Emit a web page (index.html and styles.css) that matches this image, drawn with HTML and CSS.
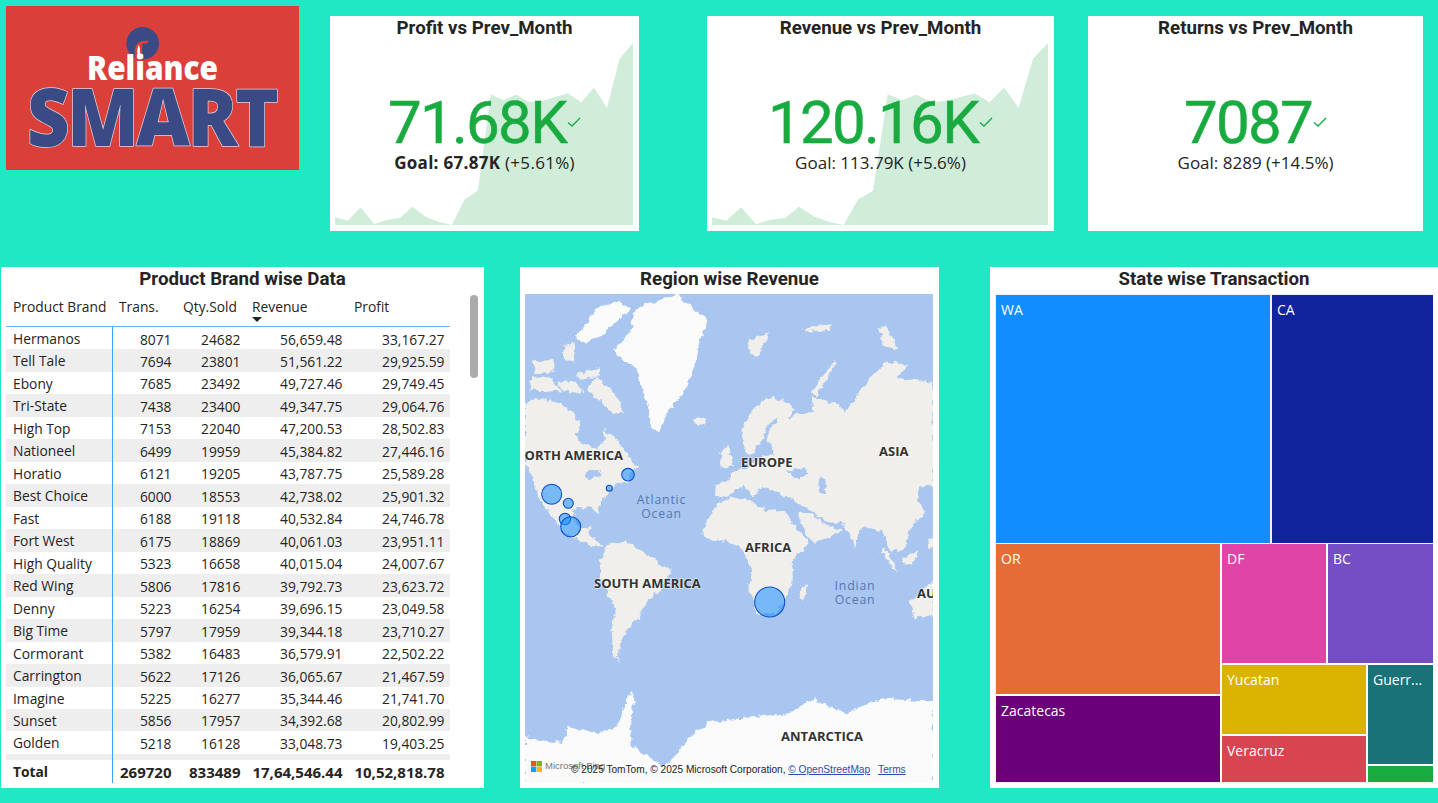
FILE: index.html
```html
<!DOCTYPE html>
<html lang="en">
<head>
<meta charset="utf-8">
<title>Reliance Smart Dashboard</title>
<link rel="stylesheet" href="styles.css">
</head>
<body>
<div class="dash">
  <section class="top">
    <div class="logo">
      <svg viewBox="6 6 293 164" width="293" height="164" aria-label="Reliance Smart logo">
        <circle cx="142.7" cy="43.3" r="16.3" fill="#3A4A85"/>
        <path d="M135.5 59 C133.5 50 135.5 43 141 41.2 L148 40.6 L148 43 L142.5 44 C141.5 48 142.5 54 142.5 59Z" fill="#DB3F3A"/>
        <path d="M138.8 45 C136.5 50 137 54 138.8 58 C140.5 54 140.8 50 138.8 45Z" fill="#fff"/>
        <text class="logo-reliance" x="87" y="80" textLength="131" lengthAdjust="spacingAndGlyphs">Reliance</text>
        <text class="logo-smart" transform="translate(27 146) scale(1 1.08)" textLength="252" lengthAdjust="spacing">SMART</text>
      </svg>
    </div>
    <article class="kpi kpi-a">
      <svg class="spark" viewBox="30 98 893 547" preserveAspectRatio="none"><polygon points="30,622 68,632 107,592 147,642 185,630 225,623 262,590 302,620 340,635 380,645 418,568 458,542 497,252 535,270 573,253 612,275 650,272 690,260 728,250 768,276 806,232 845,293 883,145 923,98 923,645 30,645"/></svg>
      <h2 class="title">Profit vs Prev_Month</h2>
      <div class="value-row"><span class="value">71.68K</span><svg class="check" viewBox="0 0 14 10"><path d="M1 5.5 L5 9 L13 1"/></svg></div>
      <p class="goal"><b>Goal: 67.87K</b> (+5.61%)</p>
    </article>
    <article class="kpi kpi-b">
      <svg class="spark" viewBox="30 98 893 547" preserveAspectRatio="none"><polygon points="30,622 68,632 107,592 147,642 185,630 225,623 262,590 302,620 340,635 380,645 418,568 458,542 497,252 535,270 573,253 612,275 650,272 690,260 728,250 768,276 806,232 845,293 883,145 923,98 923,645 30,645"/></svg>
      <h2 class="title">Revenue vs Prev_Month</h2>
      <div class="value-row"><span class="value">120.16K</span><svg class="check" viewBox="0 0 14 10"><path d="M1 5.5 L5 9 L13 1"/></svg></div>
      <p class="goal">Goal: 113.79K (+5.6%)</p>
    </article>
    <article class="kpi kpi-c">
      <h2 class="title">Returns vs Prev_Month</h2>
      <div class="value-row"><span class="value">7087</span><svg class="check" viewBox="0 0 14 10"><path d="M1 5.5 L5 9 L13 1"/></svg></div>
      <p class="goal">Goal: 8289 (+14.5%)</p>
    </article>
  </section>

  <section class="bottom">
    <article class="panel panel-table">
      <h2 class="title panel-title">Product Brand wise Data</h2>
      <div class="scrollbar"></div>
      <div class="tbl">
        <div class="row head">
          <span>Product Brand</span><span>Trans.</span><span>Qty.Sold</span><span class="sorted">Revenue<i class="arrow"></i></span><span>Profit</span>
        </div>
        <div class="tbody">
          <div class="row"><span>Hermanos</span><span>8071</span><span>24682</span><span>56,659.48</span><span>33,167.27</span></div>
          <div class="row"><span>Tell Tale</span><span>7694</span><span>23801</span><span>51,561.22</span><span>29,925.59</span></div>
          <div class="row"><span>Ebony</span><span>7685</span><span>23492</span><span>49,727.46</span><span>29,749.45</span></div>
          <div class="row"><span>Tri-State</span><span>7438</span><span>23400</span><span>49,347.75</span><span>29,064.76</span></div>
          <div class="row"><span>High Top</span><span>7153</span><span>22040</span><span>47,200.53</span><span>28,502.83</span></div>
          <div class="row"><span>Nationeel</span><span>6499</span><span>19959</span><span>45,384.82</span><span>27,446.16</span></div>
          <div class="row"><span>Horatio</span><span>6121</span><span>19205</span><span>43,787.75</span><span>25,589.28</span></div>
          <div class="row"><span>Best Choice</span><span>6000</span><span>18553</span><span>42,738.02</span><span>25,901.32</span></div>
          <div class="row"><span>Fast</span><span>6188</span><span>19118</span><span>40,532.84</span><span>24,746.78</span></div>
          <div class="row"><span>Fort West</span><span>6175</span><span>18869</span><span>40,061.03</span><span>23,951.11</span></div>
          <div class="row"><span>High Quality</span><span>5323</span><span>16658</span><span>40,015.04</span><span>24,007.67</span></div>
          <div class="row"><span>Red Wing</span><span>5806</span><span>17816</span><span>39,792.73</span><span>23,623.72</span></div>
          <div class="row"><span>Denny</span><span>5223</span><span>16254</span><span>39,696.15</span><span>23,049.58</span></div>
          <div class="row"><span>Big Time</span><span>5797</span><span>17959</span><span>39,344.18</span><span>23,710.27</span></div>
          <div class="row"><span>Cormorant</span><span>5382</span><span>16483</span><span>36,579.91</span><span>22,502.22</span></div>
          <div class="row"><span>Carrington</span><span>5622</span><span>17126</span><span>36,065.67</span><span>21,467.59</span></div>
          <div class="row"><span>Imagine</span><span>5225</span><span>16277</span><span>35,344.46</span><span>21,741.70</span></div>
          <div class="row"><span>Sunset</span><span>5856</span><span>17957</span><span>34,392.68</span><span>20,802.99</span></div>
          <div class="row"><span>Golden</span><span>5218</span><span>16128</span><span>33,048.73</span><span>19,403.25</span></div>
          <div class="row"><span></span><span></span><span></span><span></span><span></span></div>
        </div>
        <div class="row total"><span>Total</span><span>269720</span><span>833489</span><span>17,64,546.44</span><span>10,52,818.78</span></div>
      </div>
    </article>

    <article class="panel panel-map">
      <h2 class="title panel-title">Region wise Revenue</h2>
      <div class="map">
        <svg class="map-svg" viewBox="525 294 408 489" width="408" height="489">
          <defs>
            <filter id="rough" filterUnits="userSpaceOnUse" x="525" y="294" width="408" height="489">
              <feTurbulence type="fractalNoise" baseFrequency="0.16" numOctaves="4" seed="4"/>
              <feDisplacementMap in="SourceGraphic" scale="7" xChannelSelector="R" yChannelSelector="G"/>
              <feGaussianBlur stdDeviation="0.35"/>
            </filter>
          </defs>
          <rect x="525" y="294" width="408" height="489" fill="#A9C6F0"/>
          <g filter="url(#rough)">
            <g class="land" transform="translate(520 265) scale(.33333)">
              <polygon class="ice" points="280,255 330,200 345,130 420,105 470,90 520,130 565,165 535,230 525,300 490,390 440,440 420,500 395,490 385,430 370,380 350,310 300,280"/>
              <polygon class="ice" points="190,190 230,130 290,110 330,130 290,170 250,210 200,235 165,215"/>
              <polygon points="130,240 165,235 160,290 135,285"/>
              <polygon points="170,330 240,310 240,330 180,345"/>
              <polygon points="40,290 100,280 100,320 45,325"/>
              <polygon points="30,340 90,335 130,385 80,375 35,375"/>
              <polygon points="230,335 290,390 312,440 280,450 240,410 200,372"/>
              <polygon points="110,350 170,350 190,385 130,380"/>
              <polygon points="15,420 40,400 90,405 130,420 165,450 180,480 170,510 185,535 235,550 255,525 250,495 285,510 315,560 355,605 335,620 320,650 285,660 270,685 240,715 235,750 225,745 218,725 190,728 160,735 165,770 185,790 215,785 205,808 225,825 245,840 255,845 240,850 205,835 180,830 130,800 100,760 70,720 45,670 35,630 15,600"/>
              <polygon points="200,620 240,615 245,632 205,640 190,632" class="water"/>
              <ellipse cx="540" cy="468" rx="20" ry="11"/>
              <polygon points="680,225 750,205 730,240 710,280 690,260"/>
              <polygon points="875,385 900,340 950,285 935,320 890,392"/>
              <polygon points="1075,190 1100,180 1130,255 1090,240"/>
              <polygon points="850,190 935,178 930,195 860,200"/>
              <polygon points="600,565 625,540 640,600 605,610"/>
              <polygon points="582,690 585,660 620,650 640,620 670,615 690,600 720,575 760,570 740,520 760,480 770,455 745,480 730,520 712,545 690,570 665,530 670,480 700,430 750,395 800,410 825,430 800,460 830,450 880,440 875,395 900,400 960,420 975,440 1000,410 1040,350 1100,290 1165,300 1130,340 1240,350 1240,660 1200,665 1190,700 1215,740 1180,780 1170,800 1155,850 1130,860 1105,850 1090,795 1060,795 1030,785 1020,795 1005,850 985,795 975,780 930,770 900,760 880,740 850,725 820,700 790,700 775,680 730,665 700,695 670,660 640,680 620,700"/>
              <polygon class="water" points="800,615 860,610 865,630 820,640"/>
              <polygon class="water" points="895,630 915,640 920,690 900,680"/>
              <polygon points="830,740 880,750 910,775 965,795 950,810 885,830 862,815"/>
              <polygon points="545,800 590,720 640,695 690,705 740,738 790,735 810,765 840,805 870,830 815,890 820,925 810,975 770,1045 710,1050 685,965 700,925 670,855 620,830 560,825"/>
              <polygon points="835,995 860,950 865,975 850,1005"/>
              <polygon points="1170,1010 1240,945 1240,1055 1180,1057"/>
              <polygon points="1090,850 1135,915 1120,915 1085,860"/>
              <polygon points="1150,880 1195,855 1180,895 1155,900"/>
              <polygon points="1225,825 1240,815 1240,850 1228,850"/>
              <polygon points="240,885 265,835 320,830 390,875 455,915 430,965 385,1005 360,1055 310,1105 290,1175 305,1195 280,1175 275,1095 285,1025 240,945"/>
              <polygon class="ice" points="15,1415 60,1425 130,1435 140,1385 230,1405 290,1385 330,1285 340,1285 330,1435 420,1500 450,1495 500,1425 570,1370 800,1345 880,1305 980,1345 1080,1300 1240,1310 1240,1560 15,1560"/>
            </g>
          </g>
          <g class="map-labels">
            <text x="623" y="460" text-anchor="end">NORTH AMERICA</text>
            <text x="741" y="467">EUROPE</text>
            <text x="879" y="456">ASIA</text>
            <text x="745" y="552">AFRICA</text>
            <text x="594" y="588">SOUTH AMERICA</text>
            <text x="781" y="741">ANTARCTICA</text>
            <text x="917" y="598">AUSTRALIA</text>
          </g>
          <g class="ocean-labels">
            <text x="661.5" y="504">Atlantic</text>
            <text x="661.5" y="518">Ocean</text>
            <text x="855" y="590">Indian</text>
            <text x="855" y="604">Ocean</text>
          </g>
          <g class="bubbles">
            <circle cx="551.7" cy="494.3" r="10"/>
            <circle cx="568.3" cy="503.3" r="5"/>
            <circle cx="565" cy="519" r="5.7"/>
            <circle cx="570.7" cy="526.7" r="10"/>
            <circle cx="609.3" cy="488.3" r="3"/>
            <circle cx="628" cy="474.7" r="6.3"/>
            <circle cx="769.7" cy="602" r="15"/>
          </g>
        </svg>
        <div class="bing">
          <svg class="ms" viewBox="0 0 11 11"><rect width="5.3" height="5.3" fill="#F25022"/><rect x="5.7" width="5.3" height="5.3" fill="#7FBA00"/><rect y="5.7" width="5.3" height="5.3" fill="#00A4EF"/><rect x="5.7" y="5.7" width="5.3" height="5.3" fill="#FFB900"/></svg>
          <span>Microsoft Bing</span>
        </div>
        <div class="attrib">© 2025 TomTom, © 2025 Microsoft Corporation, <a>© OpenStreetMap</a><a class="terms">Terms</a></div>
      </div>
    </article>

    <article class="panel panel-tree">
      <h2 class="title panel-title">State wise Transaction</h2>
      <div class="tree">
        <div class="t-top">
          <div class="cell c-wa">WA</div>
          <div class="cell c-ca">CA</div>
        </div>
        <div class="t-bot">
          <div class="t-left">
            <div class="cell c-or">OR</div>
            <div class="cell c-za">Zacatecas</div>
          </div>
          <div class="t-right">
            <div class="t-r1">
              <div class="cell c-df">DF</div>
              <div class="cell c-bc">BC</div>
            </div>
            <div class="t-r2">
              <div class="t-yv">
                <div class="cell c-yu">Yucatan</div>
                <div class="cell c-ve">Veracruz</div>
              </div>
              <div class="t-gg">
                <div class="cell c-gu">Guerr...</div>
                <div class="cell c-gr"></div>
              </div>
            </div>
          </div>
        </div>
      </div>
    </article>
  </section>
</div>
</body>
</html>
```
FILE: styles.css
```css
* { box-sizing: border-box; }
html, body { margin: 0; padding: 0; }
body { background: #20E8C4; overflow: hidden; font-family: "Open Sans", "Noto Sans", sans-serif; color: #252423; }
.dash { width: 1438px; height: 803px; display: flex; flex-direction: column; }

.top { height: 267px; display: flex; align-items: flex-start; padding: 6px 0 0 6px; }
.logo { width: 293px; height: 164px; background: #DB3F3A; flex: none; margin-right: 31px; }
.logo svg { display: block; }
.logo-reliance { font: 800 34px "Open Sans", sans-serif; fill: #fff; }
.logo-smart { font: 800 74px "Open Sans", sans-serif; fill: #3A4A85; stroke: #D9D5E0; stroke-width: 1.4px; stroke-linejoin: round; paint-order: stroke; }

.title { margin: 0; font: 700 18.7px/24px Roboto, sans-serif; color: #252423; text-align: center; position: relative; }

.kpi { position: relative; background: #fff; height: 215px; flex: none; margin-top: 10px; display: flex; flex-direction: column; align-items: center; }
.kpi-a { width: 309px; margin-right: 68px; }
.kpi-b { width: 347px; margin-right: 34px; }
.kpi-c { width: 335px; }
.spark { position: absolute; left: 5px; top: 27px; width: calc(100% - 11px); height: 182px; }
.spark polygon { fill: #D0EDDA; }
.value-row { position: relative; display: flex; align-items: flex-start; height: 63px; margin-top: 49px; }
.value { font: 400 60px/68px Roboto, sans-serif; color: #1AAB40; letter-spacing: -1.7px; -webkit-text-stroke: .5px #1AAB40; }
.check { width: 14px; height: 10px; margin-top: 28px; margin-left: 1px; }
.check path { fill: none; stroke: #1AAB40; stroke-width: 1.3; }
.goal { position: relative; margin: 0; font: 400 17px/22px "Open Sans", sans-serif; color: #252423; }
.goal b { font-weight: 700; }
.kpi-a .goal { letter-spacing: .3px; }

.bottom { height: 521px; display: flex; padding-left: 1px; }
.panel { position: relative; background: #fff; flex: none; height: 521px; }
.panel-title { height: 27px; line-height: 24px; }
.panel-table { width: 483px; margin-right: 36px; }
.panel-map { width: 419px; margin-right: 51px; }
.panel-tree { width: 448px; }

.scrollbar { position: absolute; left: 469px; top: 28px; width: 8px; height: 83px; border-radius: 4px; background: #ABABAB; }
.tbl { margin-left: 5px; width: 444px; font-size: 13.8px; }
.row { display: grid; grid-template-columns: 106px 65px 69px 102px 102px; height: 22.47px; align-items: center; line-height: 18px; }
.row > span { text-align: right; padding-right: 5.5px; padding-top: 2px; white-space: nowrap; }
.row > span:first-child { text-align: left; padding-left: 7px; padding-right: 0; padding-top: 1px; height: 100%; border-right: 1px solid #3FA0F5; line-height: 22px; width: 107px; }
.head { height: 33px; border-bottom: 1px solid #6DB4F3; align-items: start; padding-top: 3px; }
.head > span { text-align: left; padding: 1px 0 0 7px; }
.head > span:first-child { border-right: 0; line-height: 18px; width: auto; white-space: nowrap; }
.head > span:nth-child(n+3) { padding-left: 6px; }
.sorted { position: relative; }
.arrow { position: absolute; left: 6px; top: 20px; width: 0; height: 0; border: 5px solid transparent; border-top: 5px solid #252423; border-bottom: 0; }
.tbody { height: 433px; overflow: hidden; }
.tbody .row:nth-child(even) { background: #EEEEEE; }
.total { height: 23px; font-weight: 700; font-size: 15px; }
.total > span { padding-top: 0; }
.total > span:first-child { font-size: 13.8px; line-height: 23px; padding-top: 0; }

.map { position: relative; margin-left: 5px; width: 408px; height: 489px; overflow: hidden; }
.map-svg { display: block; }
.land polygon, .land ellipse { fill: #F1EFEB; }
.land .ice { fill: #FAFAFA; }
.land .water { fill: #A9C6F0; }
.map-labels text { font: 700 13px "Open Sans", sans-serif; fill: #333; stroke: #fff; stroke-width: 1.6px; stroke-opacity: .55; paint-order: stroke; }
.ocean-labels text { font: 400 12.3px "Open Sans", sans-serif; fill: #5A76AE; text-anchor: middle; letter-spacing: .8px; }
.bubbles circle { fill: #118DFF; fill-opacity: .55; stroke: #0B4FC9; stroke-width: 1.1; }
.bing { position: absolute; left: 6px; bottom: 11px; display: flex; align-items: center; gap: 3px; font: 400 9.5px/12px "Liberation Sans", sans-serif; color: #777; }
.ms { width: 11px; height: 11px; }
.attrib { position: absolute; left: 46px; bottom: 7px; font: 400 10.15px/12px "Liberation Sans", sans-serif; color: #222; white-space: nowrap; }
.attrib a { color: #2A4FB0; text-decoration: underline; }
.attrib .terms { margin-left: 8px; }

.tree { margin-left: 5px; width: 438px; height: 489px; padding: 1px 0 1px 1px; display: flex; flex-direction: column; gap: 1px; background: #EEF0FA; }
.t-top { display: flex; gap: 2px; height: 248px; }
.t-bot { display: flex; gap: 2px; flex: 1; min-height: 0; background: #fff; }
.t-left { width: 224px; display: flex; flex-direction: column; gap: 2px; }
.t-right { flex: 1; display: flex; flex-direction: column; gap: 2px; }
.t-r1 { display: flex; gap: 2px; height: 119px; }
.t-r2 { display: flex; gap: 2px; flex: 1; min-height: 0; }
.t-yv { width: 144px; display: flex; flex-direction: column; gap: 2px; }
.t-gg { flex: 1; display: flex; flex-direction: column; gap: 2px; }
.cell { color: #fff; font-size: 14px; line-height: 19px; padding: 5px 0 0 5px; overflow: hidden; white-space: nowrap; }
.c-wa { width: 274px; background: #118DFF; }
.c-ca { flex: 1; background: #12239E; }
.c-or { height: 150px; background: #E66C37; }
.c-za { flex: 1; background: #6B007B; }
.c-df { width: 104px; background: #E044A7; }
.c-bc { flex: 1; background: #744EC2; }
.c-yu { height: 69px; background: #D9B300; }
.c-ve { flex: 1; background: #D64550; }
.c-gu { height: 99px; background: #197278; }
.c-gr { flex: 1; background: #1AAB40; }
```
